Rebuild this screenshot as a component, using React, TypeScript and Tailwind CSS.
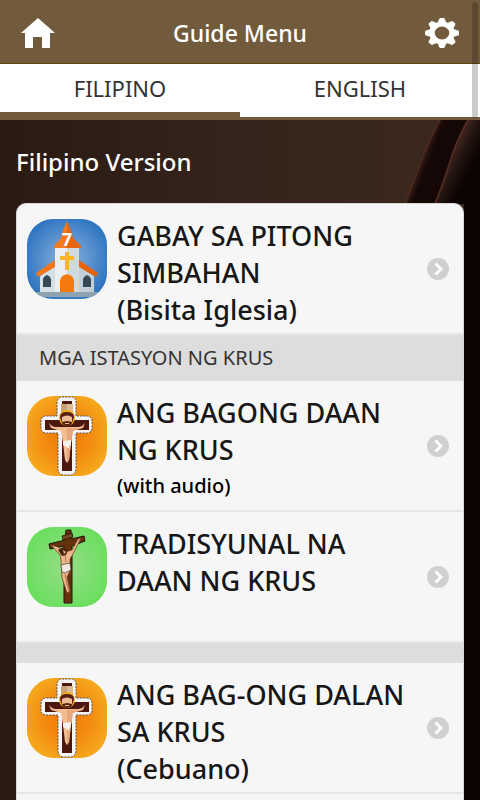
import type { ReactNode } from 'react';

const HomeIcon = () => (
  <svg viewBox="0 0 34 30" className="h-[30px] w-[34px]" fill="#fff" aria-hidden="true">
    <path d="M17 0 34 15H29V30H21V19H12V30H4V15H0Z" />
  </svg>
);

const teeth = [0, 45, 90, 135, 180, 225, 270, 315];

const GearIcon = () => (
  <svg viewBox="-17 -17 34 34" className="h-[30px] w-[34px]" preserveAspectRatio="none" fill="#fff" aria-hidden="true">
    {teeth.map((a) => (
      <path key={a} transform={`rotate(${a})`} d="M-4.5 -11 -2.8 -16Q-2.5 -17 -1.5 -17H1.5Q2.5 -17 2.8 -16L4.5 -11Z" />
    ))}
    <circle r="10" fill="none" stroke="#fff" strokeWidth="5.4" />
  </svg>
);

const ArrowIcon = () => (
  <svg viewBox="0 0 22 22" className="size-[22px] shrink-0" aria-hidden="true">
    <circle cx="11" cy="11" r="11" fill="#d0d0d0" />
    <path d="m8.5 5.5 5.5 5.5-5.5 5.5" fill="none" stroke="#fff" strokeWidth="2.8" />
  </svg>
);

const ChurchIcon = () => (
  <svg viewBox="0 0 80 80" className="size-20 shrink-0" aria-hidden="true">
    <defs>
      <radialGradient id="sky" r=".6">
        <stop offset="0" stopColor="#8fb4df" />
        <stop offset="1" stopColor="#2670be" />
      </radialGradient>
      <clipPath id="churchClip">
        <rect width="80" height="80" rx="26" />
      </clipPath>
    </defs>
    <g clipPath="url(#churchClip)">
      <rect width="80" height="80" fill="url(#sky)" />
      <path d="M0 73H80V78H0Z" fill="#8ea3af" />
      <path d="M13 57 29 46V73H13Z" fill="#d5e0e5" />
      <path d="M67 57 51 46V73H67Z" fill="#c1d0d8" />
      <path d="M28 29H40V73H28Z" fill="#e9eef0" />
      <path d="M40 29H52V73H40Z" fill="#cfdade" />
      <path d="M9 54 28 41V48L11 58Z" fill="#f4751a" />
      <path d="M71 54 52 41V48L69 58Z" fill="#e9630c" />
      <path d="M40 2 35 14 34 19 27 27V29H40Z" fill="#f47a20" />
      <path d="M40 2 45 14 46 19 54 27V29H40Z" fill="#ea650a" />
      <path d="M38 33H42V37H47V41H42V51H38V41H33V37H38Z" fill="#fbb81c" />
      <path d="M33 73V62Q33 57 40 55 47 57 47 62V73Z" fill="#f47a10" />
      <path d="M16 68V60Q17 57 20 56 23 57 24 60V68ZM56 68V60Q57 57 60 56 63 57 64 60V68Z" fill="#344955" />
      <text x="40" y="27" textAnchor="middle" fontFamily="'Noto Sans', sans-serif" fontWeight="700" fontSize="18" fill="#fff">7</text>
    </g>
  </svg>
);

const CrucifixIcon = ({ id }: { id: string }) => (
  <svg viewBox="0 0 80 80" className="size-20 shrink-0" aria-hidden="true">
    <defs>
      <radialGradient id={id} r=".62">
        <stop offset="0" stopColor="#f27405" />
        <stop offset=".5" stopColor="#f38d12" />
        <stop offset="1" stopColor="#f6b020" />
      </radialGradient>
    </defs>
    <rect width="80" height="80" rx="27" fill={`url(#${id})`} />
    <path
      d="M35 1H45Q48 1 49 5V20H61Q65 21 65 25V33Q64 37 60 37H49V73Q48 79 44 79H36Q31 78 31 73V37H18Q14 36 14 32V24Q15 20 19 20H30V6Q31 1 35 1Z"
      fill="#f4f4f4"
      stroke="#54555a"
      strokeWidth="1"
      strokeDasharray="2 1.2"
    />
    <path d="M35 5H45V24H62V34H45V75H35V34H18V24H35Z" fill="#4b1710" />
    <path d="M34 8H40V18H34Z" fill="#c6a17a" />
    <path d="M40 8H46V18H40Z" fill="#dbbb91" />
    <circle cx="40" cy="22" r="8" fill="#f3ae14" />
    <path d="M22 27Q24 30 28 31H52Q56 30 58 27L56 32 46 35 44 47 42 64 40 67 38 64 36 47 34 35 24 32Z" fill="#f1bd91" />
    <path d="M40 32H52L46 35 44 47 42 64 40 67Z" fill="#e9a87b" />
    <path d="M36 45 44 44 44 49 42 50 43 53 36 49Z" fill="#f5f2ee" />
    <path d="M33 21Q33 16 40 16T47 21L45 27Q44 30 40 30T35 27Z" fill="#57200f" />
    <path d="M35 21Q40 18 45 21L45 26 40 25 35 26Z" fill="#eebc91" />
    <path d="M38 27H42V28H38Z" fill="#eebc91" />
  </svg>
);

const StationIcon = () => (
  <svg viewBox="0 0 80 80" className="size-20 shrink-0" aria-hidden="true">
    <defs>
      <radialGradient id="meadow" r=".6">
        <stop offset="0" stopColor="#96dc89" />
        <stop offset="1" stopColor="#67df5a" />
      </radialGradient>
    </defs>
    <rect width="80" height="80" rx="26" fill="url(#meadow)" />
    <path d="M39 3H44V12L57 9 58 14 45 19V76H37V19L23 22 22 17 38 13Z" fill="#67310d" stroke="#251408" />
    <path d="M35 9 45 6 46 10 36 13Z" fill="#77451f" stroke="#251408" strokeWidth=".8" />
    <path d="M24 18 31 20 38 25 45 23 51 12 54 11 50 19 46 27 43 32 43 44 40 50 43 64 40 66 38 60 35 51 34 33 33 28Z" fill="#efb48a" stroke="#603a20" strokeWidth=".7" />
    <path d="M31 23 36 20 41 23 39 28 35 29Z" fill="#4b250f" />
    <path d="M36 23 39 25 37 27Z" fill="#efb48a" />
    <path d="M34 38 43 36 44 43 38 46 35 45Z" fill="#f1e9df" stroke="#4c3b2c" strokeWidth=".7" />
    <path d="m38 47 2 10 2 7M38 28l1 7" fill="none" stroke="#9b5d36" strokeWidth=".7" />
  </svg>
);

// folds of cloth in the top right corner
const Backdrop = () => (
  <svg viewBox="0 0 100 84" className="absolute top-0 right-0 h-[84px] w-[100px]" aria-hidden="true">
    <defs>
      <linearGradient id="fold" gradientUnits="userSpaceOnUse" x1="40" y1="40" x2="66" y2="50">
        <stop offset="0" stopColor="#3a211a" />
        <stop offset=".3" stopColor="#160807" />
        <stop offset="1" stopColor="#150706" />
      </linearGradient>
      <linearGradient id="edge" gradientUnits="userSpaceOnUse" x1="70" y1="40" x2="90" y2="50">
        <stop offset="0" stopColor="#3a221a" />
        <stop offset=".4" stopColor="#211410" />
        <stop offset="1" stopColor="#0c0302" />
      </linearGradient>
    </defs>
    <path d="M60 0Q48 22 40 44T25 84H100V0Z" fill="url(#fold)" />
    <path d="M60 0Q48 22 40 44T25 84" fill="none" stroke="#4b271d" strokeWidth="2" />
    <path d="M88 0Q76 22 70 42T55 84H100V0Z" fill="url(#edge)" />
    <path d="M88 0Q76 22 70 42T55 84" fill="none" stroke="#4f2a1f" strokeWidth="2" />
  </svg>
);

type RowProps = { icon: ReactNode; lines: string[]; note?: string };

const MenuRow = ({ icon, lines, note }: RowProps) => (
  <li className="border-b-2 border-[#e7e7e7] last:border-b-0">
    <a href="#guide" className="flex min-h-[129px] items-center pr-[14px] pl-[10px]">
      <span className="self-start pt-[15px]">{icon}</span>
      <span className="ml-[10px] flex-1 self-start pt-[13px] text-[27px] leading-[37px] font-medium whitespace-nowrap text-[#171717]">
        {lines.map((line) => (
          <span key={line} className="block">{line}</span>
        ))}
        {note && <span className="block text-[20px] leading-[35px] text-black">{note}</span>}
      </span>
      <ArrowIcon />
    </a>
  </li>
);

const App = () => {
  return (
    <div className="relative flex h-screen flex-col overflow-hidden bg-[#2b1b13] font-['Noto_Sans',sans-serif]">
      <header className="shrink-0">
        <div className="flex h-16 items-center justify-between border-b border-[#634511] bg-[#725b3d] px-[21px] pt-[3px]">
          <button type="button" aria-label="Home"><HomeIcon /></button>
          <h1 className="text-[23px] font-medium text-white">Guide Menu</h1>
          <button type="button" aria-label="Settings"><GearIcon /></button>
        </div>
        <nav className="grid h-[56px] grid-cols-2 bg-white text-center text-[22px] leading-[48px] text-[#333]">
          <a href="#filipino" className="border-b-8 border-[#725b3d]">FILIPINO</a>
          <a href="#english" className="border-b-3 border-[#725b3d]">ENGLISH</a>
        </nav>
      </header>
      <main className="relative flex-1 overflow-y-auto bg-linear-to-r from-[#2a1a12] via-[#35241b] to-[#3b291d] px-4 [scrollbar-width:none]">
        <div className="absolute inset-y-0 right-0 w-4 bg-[#0c0302]" />
        <Backdrop />
        <h2 className="relative py-[25px] text-[24px] leading-[33px] font-medium text-white">Filipino Version</h2>
        <ul className="relative overflow-hidden rounded-[10px] border border-[#d8d8d8] bg-[#f6f6f6]">
          <MenuRow icon={<ChurchIcon />} lines={['GABAY SA PITONG', 'SIMBAHAN', '(Bisita Iglesia)']} />
          <li className="h-[46px] bg-[#ddd] px-[22px] text-[20px] leading-[46px] text-[#333]">MGA ISTASYON NG KRUS</li>
          <MenuRow icon={<CrucifixIcon id="newWay" />} lines={['ANG BAGONG DAAN', 'NG KRUS']} note="(with audio)" />
          <MenuRow icon={<StationIcon />} lines={['TRADISYUNAL NA', 'DAAN NG KRUS']} />
          <li className="h-5 bg-[#ddd]" />
          <MenuRow icon={<CrucifixIcon id="cebuano" />} lines={['ANG BAG-ONG DALAN', 'SA KRUS', '(Cebuano)']} />
          <li className="h-10" />
        </ul>
      </main>
      <div className="absolute top-[2px] right-[2px] h-[116px] w-[6px] rounded-full bg-black/20" />
    </div>
  );
};

export default App;
